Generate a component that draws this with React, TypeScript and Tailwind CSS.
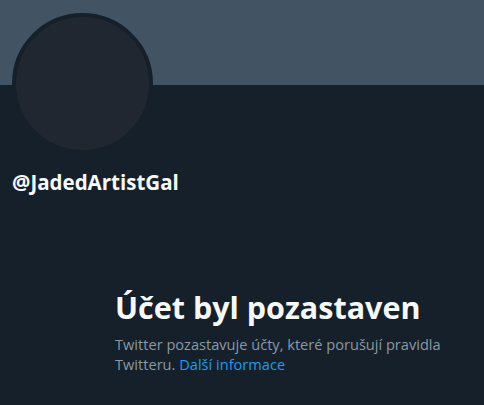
const App = () => {
  return (
    <div className="w-[484px] h-[405px] bg-[#15202b] overflow-hidden font-['Open_Sans',sans-serif]">
      <div className="h-[85px] bg-[#425364]"></div>
      <div className="px-3">
        <div className="-mt-[72px] w-[141px] h-[141px] rounded-full border-4 border-[#15202b] bg-[#202731]"></div>
        <div className="mt-[16px] text-[20.5px] leading-6 font-bold text-[#f7f9f9]">@JadedArtistGal</div>
      </div>
      <div className="mt-[95px] pl-[115px] w-[460px]">
        <div className="text-[30.5px] leading-9 font-bold text-[#f7f9f9]">Účet byl pozastaven</div>
        <div className="mt-[9px] text-[14.6px] leading-5 text-[#8b98a5]">
          Twitter pozastavuje účty, které porušují pravidla Twitteru.{" "}
          <span className="text-[#1d9bf0]">Další informace</span>
        </div>
      </div>
    </div>
  )
}

export default App
